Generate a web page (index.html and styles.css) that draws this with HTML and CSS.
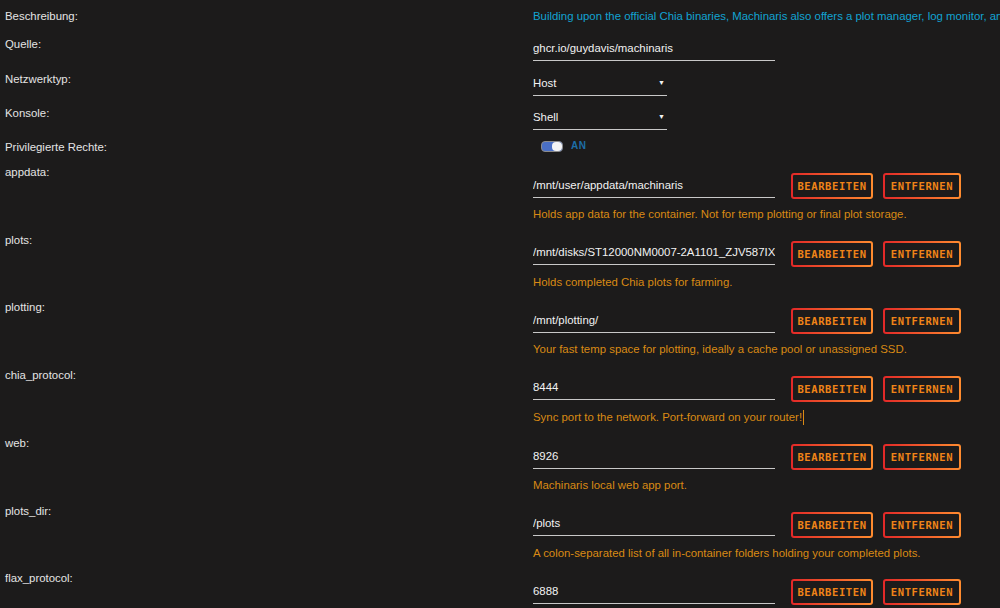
FILE: index.html
```html
<!DOCTYPE html>
<html lang="de">
<head>
  <meta charset="UTF-8" />
  <meta name="viewport" content="width=device-width, initial-scale=1.0"/>
  <title>Container bearbeiten — machinaris</title>
  <link rel="stylesheet" href="styles.css">
</head>
<body>
  <div class="form">
    <div class="row row-desc">
      <div class="label">Beschreibung:</div>
      <div class="desc">Building upon the official Chia binaries, Machinaris also offers a plot manager, log monitor, and web UI for farming.</div>
    </div>

    <div class="row row-top">
      <div class="label">Quelle:</div>
      <div class="value"><div class="input">ghcr.io/guydavis/machinaris</div></div>
    </div>

    <div class="row row-top">
      <div class="label">Netzwerktyp:</div>
      <div class="value"><div class="select">Host<span class="caret">▼</span></div></div>
    </div>

    <div class="row row-top">
      <div class="label">Konsole:</div>
      <div class="value"><div class="select">Shell<span class="caret">▼</span></div></div>
    </div>

    <div class="row row-switch">
      <div class="label">Privilegierte Rechte:</div>
      <div class="value switch-wrap">
        <span class="switch"><span class="knob"></span></span>
        <span class="switch-text">AN</span>
      </div>
    </div>

    <div class="row row-path">
      <div class="label">appdata:</div>
      <div class="value">
        <div class="controls">
          <div class="input">/mnt/user/appdata/machinaris</div>
          <button class="btn btn-edit">Bearbeiten</button>
          <button class="btn btn-remove">Entfernen</button>
        </div>
        <div class="help">Holds app data for the container. Not for temp plotting or final plot storage.</div>
      </div>
    </div>

    <div class="row row-path">
      <div class="label">plots:</div>
      <div class="value">
        <div class="controls">
          <div class="input">/mnt/disks/ST12000NM0007-2A1101_ZJV587IX/plots</div>
          <button class="btn btn-edit">Bearbeiten</button>
          <button class="btn btn-remove">Entfernen</button>
        </div>
        <div class="help">Holds completed Chia plots for farming.</div>
      </div>
    </div>

    <div class="row row-path">
      <div class="label">plotting:</div>
      <div class="value">
        <div class="controls">
          <div class="input">/mnt/plotting/</div>
          <button class="btn btn-edit">Bearbeiten</button>
          <button class="btn btn-remove">Entfernen</button>
        </div>
        <div class="help">Your fast temp space for plotting, ideally a cache pool or unassigned SSD.</div>
      </div>
    </div>

    <div class="row row-path">
      <div class="label">chia_protocol:</div>
      <div class="value">
        <div class="controls">
          <div class="input">8444</div>
          <button class="btn btn-edit">Bearbeiten</button>
          <button class="btn btn-remove">Entfernen</button>
        </div>
        <div class="help">Sync port to the network. Port-forward on your router!<span class="cursor"></span></div>
      </div>
    </div>

    <div class="row row-path">
      <div class="label">web:</div>
      <div class="value">
        <div class="controls">
          <div class="input">8926</div>
          <button class="btn btn-edit">Bearbeiten</button>
          <button class="btn btn-remove">Entfernen</button>
        </div>
        <div class="help">Machinaris local web app port.</div>
      </div>
    </div>

    <div class="row row-path">
      <div class="label">plots_dir:</div>
      <div class="value">
        <div class="controls">
          <div class="input">/plots</div>
          <button class="btn btn-edit">Bearbeiten</button>
          <button class="btn btn-remove">Entfernen</button>
        </div>
        <div class="help">A colon-separated list of all in-container folders holding your completed plots.</div>
      </div>
    </div>

    <div class="row row-path">
      <div class="label">flax_protocol:</div>
      <div class="value">
        <div class="controls">
          <div class="input">6888</div>
          <button class="btn btn-edit">Bearbeiten</button>
          <button class="btn btn-remove">Entfernen</button>
        </div>
        <div class="help">Sync port for the Flax network.</div>
      </div>
    </div>
  </div>
</body>
</html>
```

FILE: styles.css
```css
html, body {
  height: 100%;
}
body {
  margin: 0;
  background: #1c1b1b;
  color: #e4e4e4;
  font-family: 'Liberation Sans', Arial, sans-serif;
  font-size: 11.4px;
  line-height: 16px;
  overflow: hidden;
}
.form {
  padding: 8px 0 0 5px;
}
.row {
  display: grid;
  grid-template-columns: 528px 1fr;
}
.label {
  white-space: nowrap;
}
.value {
  min-width: 0;
}
.row-desc {
  padding-bottom: 12px;
}
.desc {
  color: #12a3d2;
  white-space: nowrap;
  overflow: hidden;
}
.row-top {
  padding-bottom: 10px;
}
.row-top + .row-top {
  padding-bottom: 9px;
}
.row-top .value {
  padding-top: 4px;
}
.input,
.select {
  color: #f2f2f2;
  line-height: 16px;
  padding: 2px 0 4px;
  border-bottom: 1px solid #c8c8c8;
  white-space: nowrap;
  overflow: hidden;
}
.row-top .input,
.row-top .select {
  padding-top: 0;
}
.input {
  width: 242px;
}
.select {
  width: 134px;
  display: flex;
  justify-content: space-between;
  align-items: center;
}
.caret {
  font-size: 7px;
  margin-right: 2px;
  color: #f2f2f2;
}
.row-switch {
  height: 25px;
}
.switch-wrap {
  display: flex;
  align-items: center;
  gap: 8px;
  padding: 1px 0 0 8px;
  height: 12px;
}
.switch {
  width: 20px;
  height: 9px;
  border: 1px solid #8a8a8a;
  border-radius: 4px;
  background: #4a6fc4;
  display: flex;
  justify-content: flex-end;
}
.knob {
  width: 10px;
  height: 9px;
  border-radius: 4px;
  background: #f4f4f4;
}
.switch-text {
  color: #1c6ea8;
  font-weight: bold;
  font-size: 10px;
  letter-spacing: 0.5px;
}
.row-path {
  padding-bottom: 9.67px;
}
.row-path .value {
  padding-top: 9px;
}
.controls {
  display: flex;
  align-items: center;
  height: 26px;
}
.btn {
  height: 26px;
  padding: 0;
  border: 2px solid transparent;
  border-radius: 3px;
  background: linear-gradient(#1c1b1b, #1c1b1b) padding-box,
              linear-gradient(90deg, #e22828, #ff8c2f) border-box;
  color: #f08418;
  font-family: 'DejaVu Sans Mono', 'Liberation Mono', monospace;
  font-weight: bold;
  font-size: 10.5px;
  letter-spacing: 0.6px;
  text-transform: uppercase;
  cursor: pointer;
}
.btn-edit {
  width: 82px;
  margin-left: 16px;
}
.btn-remove {
  width: 78px;
  margin-left: 10px;
}
.help {
  margin-top: 7px;
  color: #d98a14;
  white-space: nowrap;
}
.cursor {
  display: inline-block;
  width: 0;
  height: 15px;
  border-left: 1px solid #d98a14;
  vertical-align: middle;
  margin-left: 1px;
}
```
